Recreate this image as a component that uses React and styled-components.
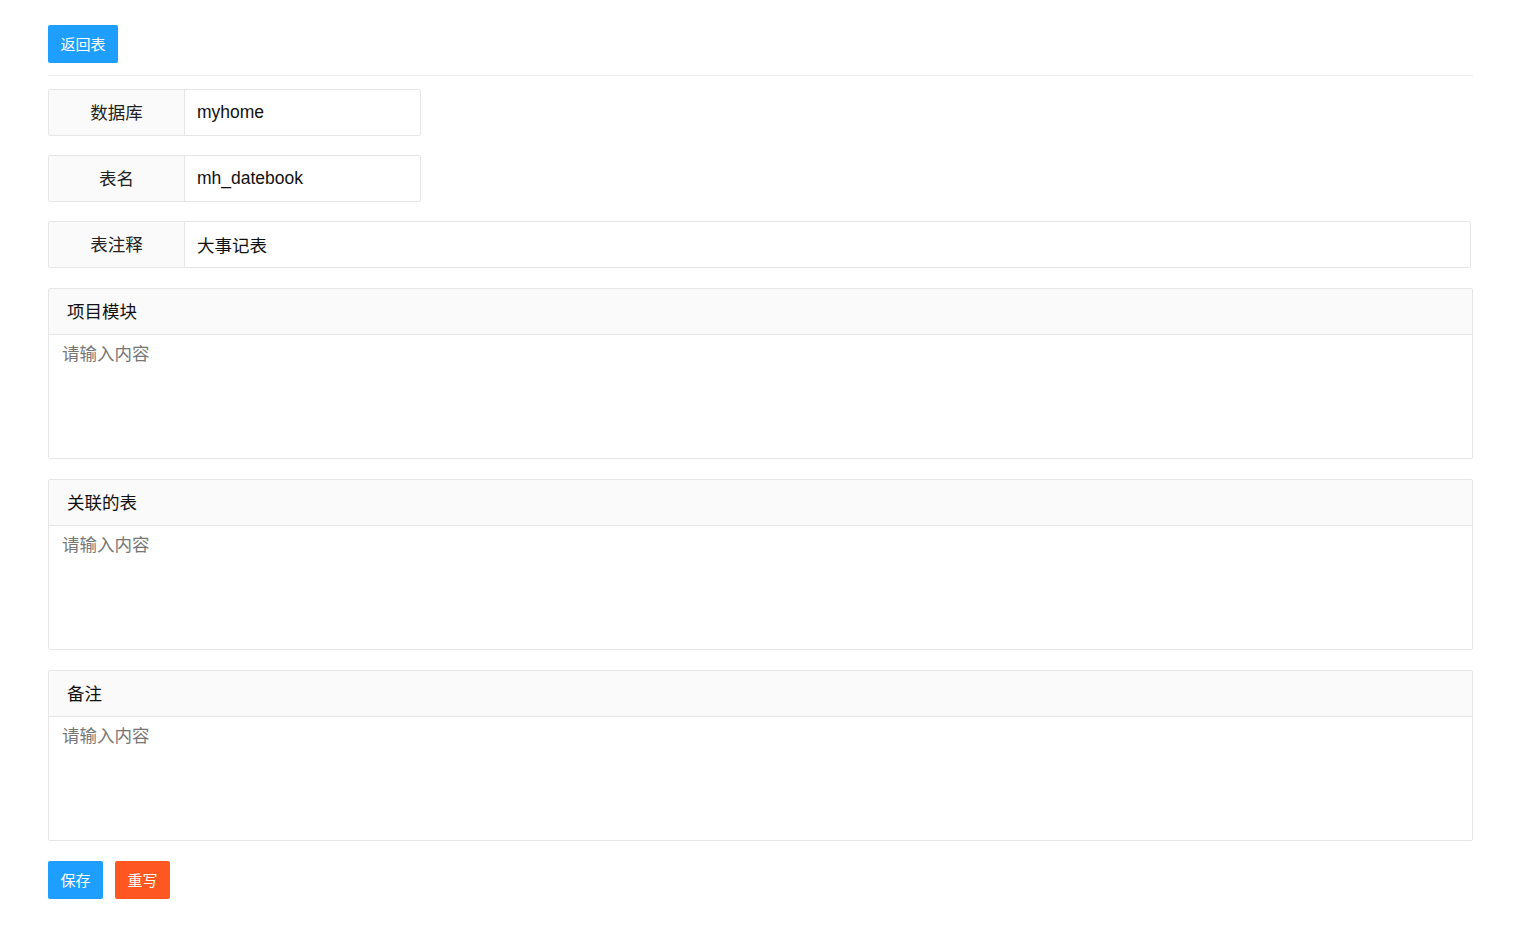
import React from "react";
import styled, { createGlobalStyle } from "styled-components";

const GlobalStyle = createGlobalStyle`
  body {
    margin: 0;
    background: #ffffff;
    font-family: "Liberation Sans", "Noto Sans CJK SC", Arial, sans-serif;
    color: #333333;
  }
`;

const Page = styled.div`
  padding: 25px 52px 40px 48px;
`;

const Button = styled.button`
  height: 38px;
  padding: 0 12.5px 1px;
  border: none;
  border-radius: 2px;
  background: ${(p) => (p.danger ? "#FF5722" : "#1E9FFF")};
  color: #ffffff;
  font-family: inherit;
  font-size: 15px;
  cursor: pointer;
`;

const Divider = styled.hr`
  margin: 12px 0 13px;
  border: none;
  border-top: 1px solid #eeeeee;
`;

const Field = styled.div`
  display: flex;
  width: ${(p) => (p.full ? "1423px" : "373px")};
  height: 47px;
  box-sizing: border-box;
  border: 1px solid #e6e6e6;
  border-radius: 2px;
  margin-bottom: ${(p) => (p.full ? "20px" : "19px")};
`;

const Label = styled.div`
  width: 135px;
  flex-shrink: 0;
  display: flex;
  align-items: center;
  justify-content: center;
  padding-bottom: 2px;
  background: #fafafa;
  border-right: 1px solid #e6e6e6;
  font-size: 17.5px;
  color: #222222;
`;

const Value = styled.div`
  flex: 1;
  display: flex;
  align-items: center;
  padding-left: 12px;
  font-size: 17.5px;
  color: #111111;
`;

const Panel = styled.div`
  border: 1px solid #e6e6e6;
  border-radius: 2px;
  margin-bottom: 20px;
`;

const PanelHead = styled.div`
  height: 46px;
  display: flex;
  align-items: center;
  padding: 0 0 2px 18px;
  box-sizing: border-box;
  background: #fafafa;
  border-bottom: 1px solid #e6e6e6;
  font-size: 17.5px;
  color: #111111;
`;

const TextArea = styled.textarea`
  display: block;
  width: 100%;
  height: 123px;
  box-sizing: border-box;
  border: none;
  outline: none;
  resize: none;
  padding: 5px 13px;
  font-family: inherit;
  font-size: 17.5px;
  color: #333333;
  &::placeholder {
    color: #777777;
  }
`;

const Actions = styled.div`
  display: flex;
  gap: 12px;
  margin-top: 1px;
`;

const fields = [
  { label: "数据库", value: "myhome" },
  { label: "表名", value: "mh_datebook" },
  { label: "表注释", value: "大事记表", full: true },
];

const panels = ["项目模块", "关联的表", "备注"];

export default function App() {
  return (
    <>
      <GlobalStyle />
      <Page>
        <Button>返回表</Button>
        <Divider />
        {fields.map((f) => (
          <Field key={f.label} full={f.full}>
            <Label>{f.label}</Label>
            <Value>{f.value}</Value>
          </Field>
        ))}
        {panels.map((title) => (
          <Panel key={title}>
            <PanelHead>{title}</PanelHead>
            <TextArea placeholder="请输入内容" />
          </Panel>
        ))}
        <Actions>
          <Button>保存</Button>
          <Button danger>重写</Button>
        </Actions>
      </Page>
    </>
  );
}
